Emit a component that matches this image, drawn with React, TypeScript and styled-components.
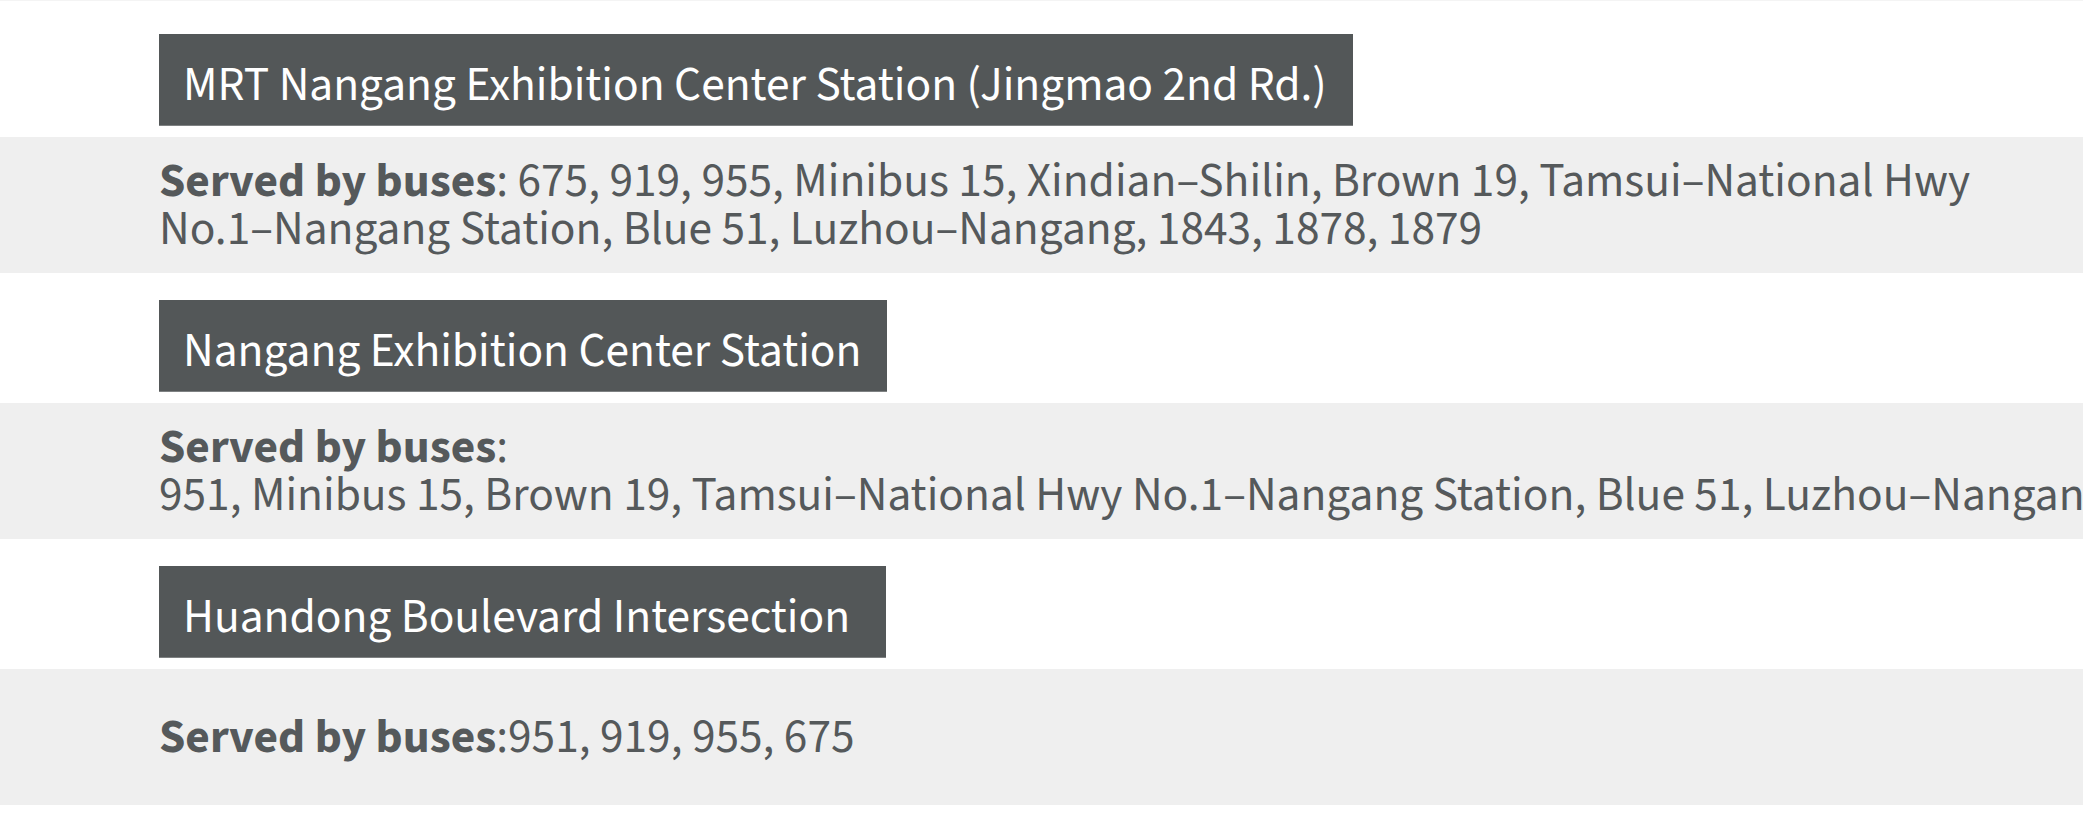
import * as React from 'react';
import styled, { createGlobalStyle } from 'styled-components';

const Global = createGlobalStyle`
    html, body {
        margin: 0;
        padding: 0;
        background: #FFFFFF;
        overflow: hidden;
    }
    body {
        font-family: 'Source Sans Pro', 'Source Sans 3', Lato, 'Liberation Sans', sans-serif;
        color: #55595B;
    }
`

interface StopData {
    name: string;
    buses: string;
    breakAfterLabel?: boolean;
    tight?: boolean;
}

const stops: StopData[] = [
    {
        name: 'MRT Nangang Exhibition Center Station (Jingmao 2nd Rd.)',
        buses: '675, 919, 955, Minibus 15, Xindian–Shilin, Brown 19, Tamsui–National Hwy No.1–Nangang Station, Blue 51, Luzhou–Nangang, 1843, 1878, 1879',
    },
    {
        name: 'Nangang Exhibition Center Station',
        buses: '951, Minibus 15, Brown 19, Tamsui–National Hwy No.1–Nangang Station, Blue 51, Luzhou–Nangang, 1843, 1878, 1879',
        breakAfterLabel: true,
    },
    {
        name: 'Huandong Boulevard Intersection',
        buses: '951, 919, 955, 675',
        tight: true,
    },
]

const Page = styled.div`
    width: 100%;
    border-top: 1px solid #F4F4F4;
    padding-top: 6px;
`

const StopSection = styled.section`
    padding-top: 27px;
`

const TitleRow = styled.div`
    padding-left: 159px;
`

const StopTitle = styled.h2`
    display: inline-block;
    box-sizing: border-box;
    min-width: 727px;
    height: 92px;
    margin: 0;
    padding: 12px 26px 0 24px;
    background-color: #535758;
    border-bottom: 1px solid #7E8182;
    color: #FFFFFF;
    font-size: 47.4px;
    font-weight: 400;
    line-height: 79px;
    white-space: nowrap;
`

const BusBand = styled.div`
    display: flex;
    align-items: center;
    box-sizing: border-box;
    height: 136px;
    margin-top: 11px;
    padding: 0 40px 0 159px;
    background-color: #EFEFEF;
`

const BusText = styled.p<{ $nowrap?: boolean }>`
    margin: 0;
    font-size: 47.4px;
    line-height: 48px;
    white-space: ${props => props.$nowrap ? 'nowrap' : 'normal'};
`

const Label = styled.strong`
    font-weight: 700;
`

const Stop = ({ data }: { data: StopData }) => (
    <StopSection>
        <TitleRow>
            <StopTitle>{data.name}</StopTitle>
        </TitleRow>
        <BusBand>
            <BusText $nowrap={data.breakAfterLabel}>
                <Label>Served by buses</Label>:
                {data.breakAfterLabel ? <br /> : data.tight ? null : ' '}
                {data.buses}
            </BusText>
        </BusBand>
    </StopSection>
)

export default class App extends React.Component {
    render() {
        return (
            <Page>
                <Global />
                {stops.map(stop => <Stop key={stop.name} data={stop} />)}
            </Page>
        );
    }
}
